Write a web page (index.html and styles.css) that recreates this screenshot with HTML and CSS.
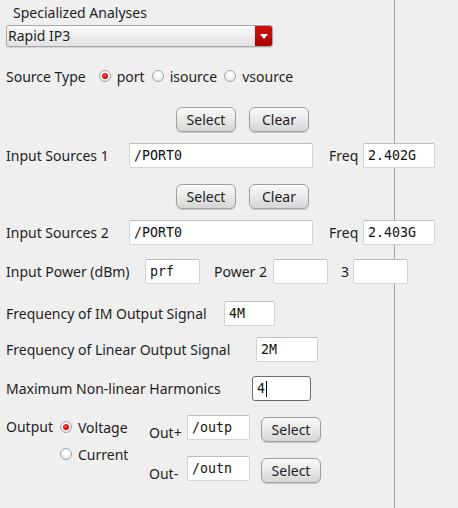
FILE: index.html
```html
<!DOCTYPE html>
<html>
<head>
<meta charset="utf-8">
<link rel="stylesheet" href="styles.css">
</head>
<body>
<div class="window">
  <div class="panel">
    <div class="title">Specialized Analyses</div>
    <div class="combo">
      <span class="combo-text">Rapid IP3</span>
      <span class="combo-arrow"><svg width="8" height="5" viewBox="0 0 8 5"><path d="M0 0H8L4 5Z" fill="#fff"/></svg></span>
    </div>

    <div class="row source-row">
      <span class="label">Source Type</span>
      <span class="radio on"></span><span class="rlabel">port</span>
      <span class="radio"></span><span class="rlabel">isource</span>
      <span class="radio"></span><span class="rlabel">vsource</span>
    </div>

    <div class="btnrow first">
      <span class="btn">Select</span><span class="btn">Clear</span>
    </div>
    <div class="row inrow r1">
      <span class="label lw123">Input Sources 1</span>
      <span class="field mono w184">/PORT0</span>
      <span class="label freq">Freq</span>
      <span class="field mono w72">2.402G</span>
    </div>

    <div class="btnrow second">
      <span class="btn">Select</span><span class="btn">Clear</span>
    </div>
    <div class="row inrow r2">
      <span class="label lw123">Input Sources 2</span>
      <span class="field mono w184">/PORT0</span>
      <span class="label freq">Freq</span>
      <span class="field mono w72">2.403G</span>
    </div>

    <div class="row power">
      <span class="label lw139">Input Power (dBm)</span>
      <span class="field mono w55">prf</span>
      <span class="label p2">Power 2</span>
      <span class="field w55"></span>
      <span class="label p3">3</span>
      <span class="field w55"></span>
    </div>

    <div class="row im">
      <span class="label lw218">Frequency of IM Output Signal</span>
      <span class="field mono w51">4M</span>
    </div>
    <div class="row lin">
      <span class="label lw250">Frequency of Linear Output Signal</span>
      <span class="field mono w62">2M</span>
    </div>
    <div class="row harm">
      <span class="label lw246">Maximum Non-linear Harmonics</span>
      <span class="field mono w59 focus">4<span class="caret"></span></span>
    </div>

    <div class="output">
      <span class="label out-label">Output</span>
      <div class="out-radios">
        <div class="orow"><span class="radio on"></span><span class="rlabel">Voltage</span></div>
        <div class="orow cur"><span class="radio"></span><span class="rlabel">Current</span></div>
      </div>
      <div class="out-grid">
        <span class="label olab">Out+</span>
        <span class="field mono w63">/outp</span>
        <span class="btn obtn">Select</span>
        <span class="label olab">Out-</span>
        <span class="field mono w63">/outn</span>
        <span class="btn obtn">Select</span>
      </div>
    </div>
  </div>
  <div class="side"></div>
</div>
</body>
</html>
```

FILE: styles.css
```css
html, body {
  margin: 0;
  padding: 0;
  background: #efefef;
}
body {
  font-family: "Noto Sans", "Open Sans", sans-serif;
  font-size: 14px;
  color: #1e1e1e;
  width: 458px;
  height: 508px;
  overflow: hidden;
}
.window {
  display: flex;
  height: 508px;
}
.panel {
  width: 388px;
  padding-left: 6px;
  border-right: 1px solid #a3a3a3;
  height: 508px;
  flex: none;
}
.side {
  flex: 1;
}
.label {
  flex: none;
  white-space: nowrap;
}
.title {
  padding-top: 3px;
  line-height: 19px;
  margin-left: 7px;
}
.combo {
  margin-top: 3px;
  width: 265px;
  height: 20px;
  border: 1px solid #a8a8a8;
  border-radius: 3px;
  background: linear-gradient(#fbfbfb, #e2e2e2);
  display: flex;
  align-items: center;
  justify-content: space-between;
  box-shadow: 0 1px 1px rgba(0,0,0,0.12);
}
.combo-text {
  padding-left: 1px;
  line-height: 20px;
}
.combo-arrow {
  width: 17px;
  height: 20px;
  background: linear-gradient(#d11010, #a80000);
  border-radius: 0 2px 2px 0;
  display: flex;
  align-items: center;
  justify-content: center;
}
.row {
  display: flex;
  align-items: center;
}
.source-row {
  margin-top: 18px;
  height: 22px;
}
.radio {
  width: 10px;
  height: 10px;
  border: 1px solid #a6a6a6;
  border-radius: 50%;
  background: radial-gradient(circle at 50% 35%, #ffffff 30%, #d9d9d9 100%);
  position: relative;
  flex: none;
}
.radio.on::after {
  content: "";
  position: absolute;
  left: 2px;
  top: 2px;
  width: 6px;
  height: 6px;
  border-radius: 50%;
  background: radial-gradient(circle at 40% 35%, #ff4a4a, #c80000 70%);
}
.source-row .label {
  margin-right: 13px;
}
.rlabel {
  margin-left: 6px;
  white-space: nowrap;
}
.source-row .rlabel {
  margin-right: 7px;
}
.btnrow {
  display: flex;
  gap: 13px;
  padding-left: 170px;
  height: 25px;
}
.btnrow.first { margin-top: 20px; }
.btnrow.second { margin-top: 16px; }
.btn {
  width: 58px;
  height: 23px;
  border: 1px solid #a0a0a0;
  border-radius: 6px;
  background: linear-gradient(#fafafa, #d6d6d6);
  box-shadow: 0 1px 1px rgba(0,0,0,0.18);
  display: flex;
  align-items: center;
  justify-content: center;
  color: #1e1e1e;
  flex: none;
}
.field {
  height: 23px;
  border: 1px solid #d2d2d2;
  border-top-color: #bdbdbd;
  border-radius: 2px;
  background: #fff;
  display: flex;
  align-items: center;
  padding-left: 4px;
  box-sizing: content-box;
  flex: none;
}
.mono {
  font-family: "DejaVu Sans Mono", monospace;
  font-size: 13.3px;
  color: #111;
}
.w184 { width: 178px; }
.w72 { width: 66px; }
.w55 { width: 49px; }
.w51 { width: 45px; }
.w62 { width: 56px; }
.w59 { width: 53px; }
.w63 { width: 57px; }
.lw123 { width: 123px; }
.lw139 { width: 139px; }
.lw218 { width: 218px; }
.lw250 { width: 250px; }
.lw246 { width: 246px; }
.inrow { height: 25px; }
.r1 { margin-top: 11px; }
.r2 { margin-top: 11px; }
.freq {
  margin-left: 16px;
  width: 34px;
}
.power { margin-top: 14px; height: 25px; }
.p2 { margin-left: 14px; width: 59px; }
.p3 { margin-left: 13px; width: 12px; }
.im { margin-top: 17px; height: 25px; }
.lin { margin-top: 11px; height: 25px; }
.harm { margin-top: 14px; height: 25px; }
.focus {
  border-color: #6e6e6e;
  border-radius: 3px;
}
.caret {
  display: inline-block;
  width: 1px;
  height: 16px;
  background: #000;
  margin-left: 1px;
}
.output {
  margin-top: 14px;
  display: flex;
  align-items: flex-start;
}
.out-label {
  width: 54px;
  line-height: 20px;
  margin-top: 2px;
}
.out-radios {
  width: 89px;
  display: flex;
  flex-direction: column;
  flex: none;
}
.orow {
  display: flex;
  align-items: center;
  height: 20px;
  margin-top: 2px;
}
.orow.cur { margin-top: 7px; }
.out-grid {
  display: grid;
  grid-template-columns: 38px 63px auto;
  column-gap: 0;
  row-gap: 14px;
  align-items: start;
}
.olab {
  margin-top: 10px;
  line-height: 16px;
}
.obtn {
  margin-left: 11px;
  margin-top: 2px;
}
```
